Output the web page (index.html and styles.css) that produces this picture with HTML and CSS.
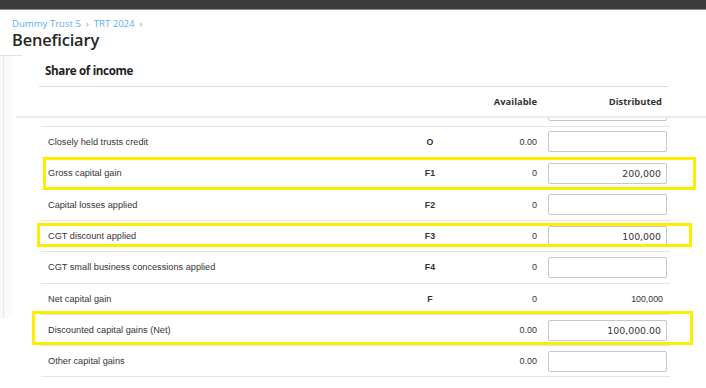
FILE: index.html
```html
<!DOCTYPE html>
<html lang="en">
<head>
<meta charset="utf-8">
<title>Beneficiary</title>
<link rel="stylesheet" href="styles.css">
</head>
<body>
<div class="topbar"></div>
<header class="page-head">
  <nav class="crumbs">
    <a class="crumb">Dummy Trust 5</a><span class="sep">›</span><a class="crumb">TRT 2024</a><span class="sep">›</span>
  </nav>
  <h1 class="title">Beneficiary</h1>
</header>
<div class="workspace">
  <aside class="rail"></aside>
  <section class="panel">
    <h2 class="panel-title">Share of income</h2>
    <div class="thead">
      <div class="grid">
        <span></span><span></span>
        <span class="th th-avail">Available</span>
        <span class="th th-dist">Distributed</span>
      </div>
    </div>
    <div class="tbody">
      <div class="row row-partial">
        <span class="label"></span><span class="code"></span><span class="avail"></span>
        <input class="field" type="text" value="">
      </div>
      <div class="row">
        <span class="label">Closely held trusts credit</span><span class="code">O</span><span class="avail">0.00</span>
        <input class="field" type="text" value="">
      </div>
      <div class="row">
        <span class="label">Gross capital gain</span><span class="code">F1</span><span class="avail">0</span>
        <input class="field" type="text" value="200,000">
      </div>
      <div class="row">
        <span class="label">Capital losses applied</span><span class="code">F2</span><span class="avail">0</span>
        <input class="field" type="text" value="">
      </div>
      <div class="row">
        <span class="label">CGT discount applied</span><span class="code">F3</span><span class="avail">0</span>
        <input class="field" type="text" value="100,000">
      </div>
      <div class="row">
        <span class="label">CGT small business concessions applied</span><span class="code">F4</span><span class="avail">0</span>
        <input class="field" type="text" value="">
      </div>
      <div class="row">
        <span class="label">Net capital gain</span><span class="code">F</span><span class="avail">0</span>
        <span class="total">100,000</span>
      </div>
      <div class="row">
        <span class="label">Discounted capital gains (Net)</span><span class="code"></span><span class="avail">0.00</span>
        <input class="field" type="text" value="100,000.00">
      </div>
      <div class="row row-last">
        <span class="label">Other capital gains</span><span class="code"></span><span class="avail">0.00</span>
        <input class="field" type="text" value="">
      </div>
      <div class="mark mark-gross"></div>
      <div class="mark mark-cgt"></div>
      <div class="mark mark-disc"></div>
    </div>
  </section>
</div>
</body>
</html>
```
FILE: styles.css
```css
html, body {
  margin: 0;
  padding: 0;
  background: #ffffff;
  width: 706px;
  height: 388px;
  overflow: hidden;
}

body {
  font-family: "Liberation Sans", Arial, sans-serif;
  color: #333;
}

.topbar {
  display: block;
  height: 0;
  border-top: 9px solid #3b3b3b;
  border-bottom: 1px solid #8c8c8c;
  background: #3b3b3b;
}

.page-head {
  padding: 8px 0 0 12px;
  height: 37px;
}

.crumbs {
  font-family: "Open Sans", sans-serif;
  font-size: 9.6px;
  line-height: 11px;
  color: #5eaef0;
  display: flex;
  align-items: center;
}

.crumb {
  color: #5eaef0;
}

.sep {
  color: #8a8a8a;
  margin: 0 5px;
  font-size: 9px;
}

.title {
  margin: 1px 0 0;
  font-family: "Open Sans", sans-serif;
  font-weight: 600;
  font-size: 16.4px;
  line-height: 19px;
  color: #262626;
  letter-spacing: -0.15px;
}

.workspace {
  display: flex;
  align-items: flex-start;
}

.rail {
  width: 22px;
  height: 262px;
  margin-right: -6px;
  border-top: 1px solid #e3e3e3;
  background: linear-gradient(to right, #f8f9fa 0 3px, #e6e8eb 3px 4px, #f9fafb 4px 12px, transparent 12px);
  flex: none;
}

.panel {
  flex: 1;
  min-width: 0;
}

.panel-title {
  margin: 0 38px 0 23px;
  padding: 8px 0 7px 6px;
  font-family: "Open Sans", sans-serif;
  font-weight: 700;
  font-size: 11.6px;
  line-height: 16px;
  letter-spacing: -0.35px;
  color: #222;
  border-bottom: 1px solid #dcdcdc;
}

.thead {
  height: 29px;
  border-bottom: 2px solid #ececec;
  display: flex;
  align-items: center;
}

.grid,
.row {
  display: grid;
  grid-template-columns: 330px 104px 55px 130px;
  align-items: center;
  margin-left: 25px;
  width: 629px;
  padding-left: 7px;
  box-sizing: border-box;
}

.th {
  font-family: "Open Sans", sans-serif;
  font-weight: 700;
  font-size: 9.4px;
  color: #333;
  text-align: right;
}

.th-dist {
  padding-right: 5px;
}

.tbody {
  position: relative;
  height: 271px;
  overflow: hidden;
  margin-top: 0;
}

.row {
  height: 31.375px;
  border-top: 1px solid #e4e4e4;
}

.row > .field {
  justify-self: end;
}

.row-partial {
  margin-top: -23.6px;
  border-top: none;
}

.row-last {
  border-bottom: 1px solid #e4e4e4;
}

.label {
  font-size: 9.2px;
  color: #333;
  white-space: nowrap;
}

.code {
  text-align: center;
  font-family: "Liberation Sans", Arial, sans-serif;
  font-weight: 700;
  font-size: 8.8px;
  color: #333;
}

.avail {
  text-align: right;
  font-family: "Liberation Sans", Arial, sans-serif;
  font-size: 9px;
  color: #333;
}

.field {
  width: 119px;
  height: 21px;
  box-sizing: border-box;
  border: 1px solid #c8c8c8;
  border-radius: 2px;
  padding: 0 5px;
  text-align: right;
  font-family: "DejaVu Sans", Verdana, sans-serif;
  font-size: 9.4px;
  color: #333;
  background: #fff;
  outline: none;
}

.total {
  text-align: right;
  padding-right: 4px;
  font-size: 8.8px;
  color: #333;
}

.mark {
  position: absolute;
  border: 3px solid #fcee00;
  box-sizing: border-box;
  pointer-events: none;
}

.mark-gross {
  left: 27px;
  top: 39px;
  width: 653px;
  height: 33px;
}

.mark-cgt {
  left: 21px;
  top: 105px;
  width: 655px;
  height: 24px;
}

.mark-disc {
  left: 16px;
  top: 193px;
  width: 661px;
  height: 34px;
}
```
